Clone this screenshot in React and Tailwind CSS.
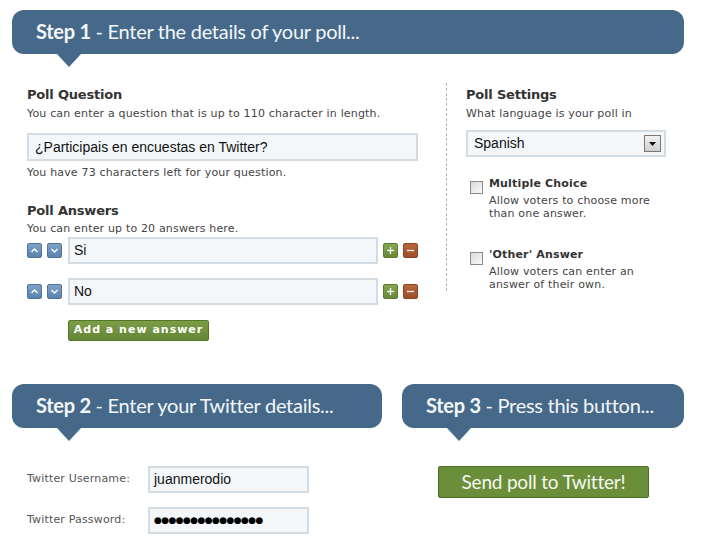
import React from "react";

function Banner({ bold, rest, className }) {
  return (
    <div className={"relative h-[44px] shrink-0 rounded-[12px] bg-[#46698a] " + className}>
      <div className="pl-[24px] font-['Lato',sans-serif] text-[20px] leading-[43px] tracking-[-0.28px] text-[#f3f7fa] whitespace-nowrap">
        <span className="font-bold">{bold}</span> - {rest}
      </div>
      <div className="absolute left-[45px] top-[44px] h-0 w-0 border-l-[12px] border-r-[12px] border-t-[13px] border-l-transparent border-r-transparent border-t-[#46698a]" />
    </div>
  );
}

function Arrow({ up }) {
  return (
    <div className="flex h-[15px] w-[15px] items-center justify-center rounded-[2px] border border-[#4d7399] bg-gradient-to-b from-[#7fa3c6] to-[#5a84ad]">
      <svg width="7" height="5" viewBox="0 0 7 5">
        {up ? (
          <path d="M0.5 4 L3.5 1 L6.5 4" fill="none" stroke="white" strokeWidth="1.4" />
        ) : (
          <path d="M0.5 1 L3.5 4 L6.5 1" fill="none" stroke="white" strokeWidth="1.4" />
        )}
      </svg>
    </div>
  );
}

function PlusMinus({ plus }) {
  return (
    <div
      className={
        plus
          ? "flex h-[15px] w-[15px] items-center justify-center rounded-[2px] border border-[#5a7a2c] bg-gradient-to-b from-[#86a653] to-[#68893a]"
          : "flex h-[15px] w-[15px] items-center justify-center rounded-[2px] border border-[#8a4420] bg-gradient-to-b from-[#b9683c] to-[#9a5028]"
      }
    >
      <svg width="9" height="9" viewBox="0 0 9 9">
        <path d="M1 4.5 H8" stroke="white" strokeWidth="1.3" />
        {plus && <path d="M4.5 1 V8" stroke="white" strokeWidth="1.3" />}
      </svg>
    </div>
  );
}

function AnswerRow({ value }) {
  return (
    <div className="flex items-center">
      <Arrow up />
      <div className="ml-[5px]">
        <Arrow />
      </div>
      <div className="ml-[6px] flex h-[27px] w-[310px] items-center border-2 border-[#d3dbe3] bg-[#f4f7fa] pl-[4px] font-['Liberation_Sans',Arial,sans-serif] text-[14px] tracking-normal text-[#111]">
        {value}
      </div>
      <div className="ml-[5px]">
        <PlusMinus plus />
      </div>
      <div className="ml-[5px]">
        <PlusMinus />
      </div>
    </div>
  );
}

function Checkbox() {
  return (
    <div className="mt-[4px] h-[13px] w-[13px] shrink-0 border border-[#8a8a8a] bg-gradient-to-br from-[#d8d8d8] to-[#fbfbfb]" />
  );
}

export default function App() {
  return (
    <div className="h-[539px] w-[703px] overflow-hidden bg-white pl-[12px] pt-[10px] font-['DejaVu_Sans',Verdana,sans-serif] tracking-[0.17px] text-[#444]">
      <Banner bold="Step 1" rest="Enter the details of your poll..." className="w-[672px]" />

      <div className="mt-[29px] flex pl-[15px]">
        <div className="w-[391px] pt-[4px]">
          <div className="text-[13px] font-bold leading-[16px] tracking-[-0.2px] text-[#333]">Poll Question</div>
          <div className="mt-[4px] text-[11px] leading-[14px]">
            You can enter a question that is up to 110 character in length.
          </div>
          <div className="mt-[12px] flex h-[28px] items-center border-2 border-[#d3dbe3] bg-[#f4f7fa] pl-[6px] font-['Liberation_Sans',Arial,sans-serif] text-[14px] tracking-normal text-[#111]">
            ¿Participais en encuestas en Twitter?
          </div>
          <div className="mt-[5px] text-[11px] leading-[14px]">You have 73 characters left for your question.</div>

          <div className="mt-[23px] text-[13px] font-bold leading-[16px] tracking-[-0.2px] text-[#333]">Poll Answers</div>
          <div className="mt-[3px] text-[11px] leading-[14px]">You can enter up to 20 answers here.</div>
          <div className="mt-[1px]">
            <AnswerRow value="Si" />
          </div>
          <div className="mt-[14px]">
            <AnswerRow value="No" />
          </div>
          <div className="mt-[15px] pl-[41px]">
            <div className="flex h-[21px] w-[141px] items-center justify-center rounded-[2px] border border-[#557529] bg-gradient-to-b from-[#7c9c48] to-[#648636] text-[11px] font-bold tracking-[1px] text-white">
              Add a new answer
            </div>
          </div>
        </div>

        <div className="ml-[28px] h-[208px] border-l border-dashed border-[#b5b5b5]" />

        <div className="ml-[19px] w-[210px] pt-[4px]">
          <div className="text-[13px] font-bold leading-[16px] tracking-[-0.2px] text-[#333]">Poll Settings</div>
          <div className="mt-[4px] text-[11px] leading-[14px]">What language is your poll in</div>
          <div className="mt-[9px] flex h-[27px] w-[200px] items-center justify-between border-2 border-[#d3dbe3] bg-[#f4f7fa] pl-[6px] pr-[3px] font-['Liberation_Sans',Arial,sans-serif] text-[14px] tracking-normal text-[#111]">
            <span>Spanish</span>
            <div className="flex h-[17px] w-[17px] items-center justify-center border border-[#777] bg-gradient-to-b from-[#f2f2f2] to-[#cfcfcf]">
              <svg width="7" height="4" viewBox="0 0 7 4">
                <path d="M0 0 H7 L3.5 4 Z" fill="#111" />
              </svg>
            </div>
          </div>

          <div className="mt-[20px] flex pl-[4px]">
            <Checkbox />
            <div className="ml-[6px]">
              <div className="text-[11px] font-bold leading-[14px] text-[#333]">Multiple Choice</div>
              <div className="mt-[3px] text-[11px] leading-[13px]">
                Allow voters to choose more
                <br />
                than one answer.
              </div>
            </div>
          </div>

          <div className="mt-[28px] flex pl-[4px]">
            <Checkbox />
            <div className="ml-[6px]">
              <div className="text-[11px] font-bold leading-[14px] text-[#333]">'Other' Answer</div>
              <div className="mt-[3px] text-[11px] leading-[13px]">
                Allow voters can enter an
                <br />
                answer of their own.
              </div>
            </div>
          </div>
        </div>
      </div>

      <div className="mt-[43px] flex gap-[20px]">
        <div className="w-[370px]">
          <Banner bold="Step 2" rest="Enter your Twitter details..." className="w-[370px]" />
          <div className="mt-[38px] pl-[15px]">
            <div className="flex items-center">
              <div className="w-[121px] text-[11px] text-[#555]">Twitter Username:</div>
              <div className="flex h-[27px] w-[161px] items-center border-2 border-[#d3dbe3] bg-[#f4f7fa] pl-[4px] font-['Liberation_Sans',Arial,sans-serif] text-[14px] tracking-normal text-[#111]">
                juanmerodio
              </div>
            </div>
            <div className="mt-[14px] flex items-center">
              <div className="w-[121px] text-[11px] text-[#555]">Twitter Password:</div>
              <div className="flex h-[27px] w-[161px] items-center border-2 border-[#d3dbe3] bg-[#f4f7fa] pl-[4px] font-['DejaVu_Sans',sans-serif] text-[9px] tracking-[-0.6px] text-[#000]">
                ●●●●●●●●●●●●●●●
              </div>
            </div>
          </div>
        </div>
        <div className="w-[282px]">
          <Banner bold="Step 3" rest="Press this button..." className="w-[282px]" />
          <div className="mt-[38px] pl-[36px]">
            <div className="flex h-[32px] w-[211px] items-center justify-center rounded-[2px] border border-[#4f6d28] bg-[#6b8e3a] font-['Lato',sans-serif] text-[19px] tracking-[-0.2px] text-[#f5f8f0]">
              Send poll to Twitter!
            </div>
          </div>
        </div>
      </div>
    </div>
  );
}
